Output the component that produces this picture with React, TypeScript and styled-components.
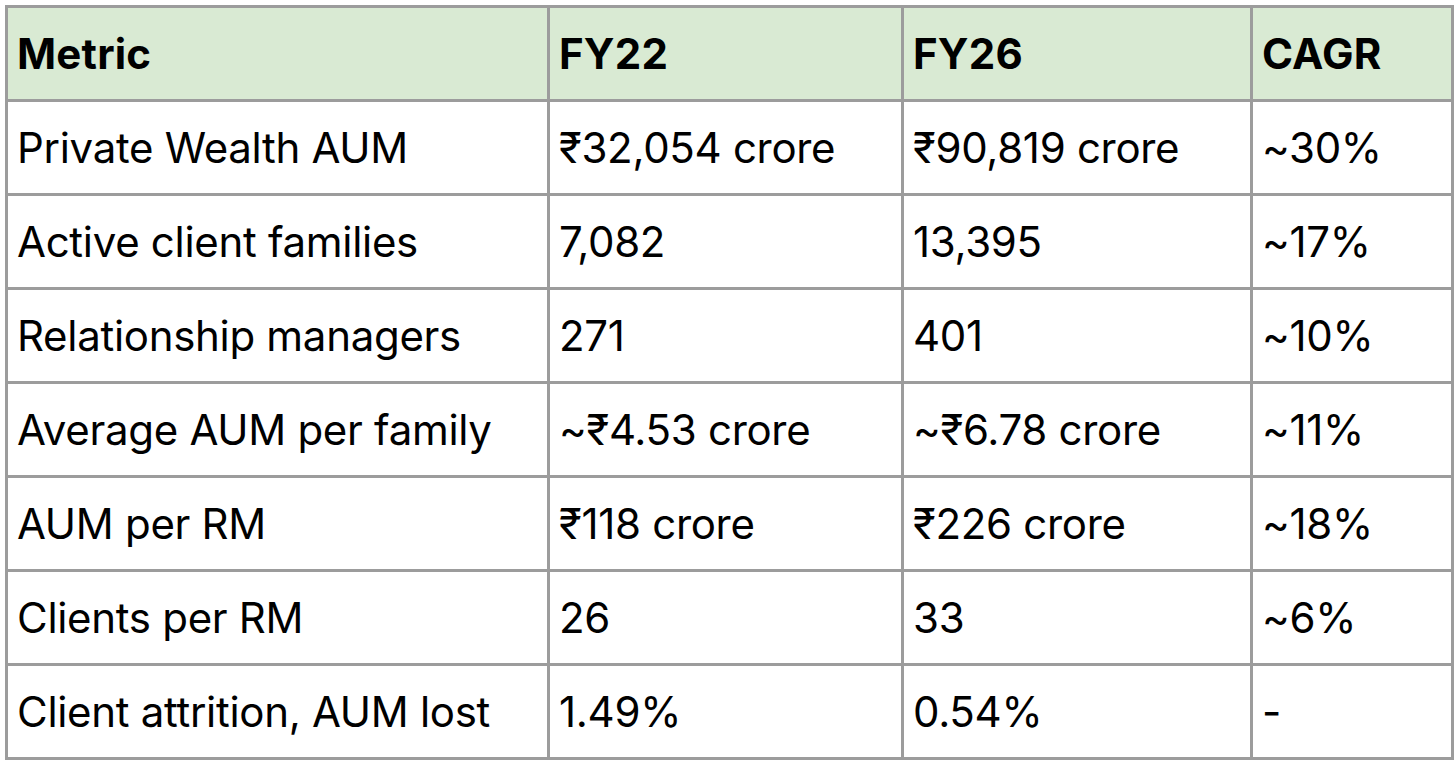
import styled, { createGlobalStyle } from "styled-components";

const GlobalStyle = createGlobalStyle`
    html, body {
        margin: 0;
        padding: 0;
        background: #ffffff;
    }
    body {
        font-family: Inter, "Noto Sans", "DejaVu Sans", sans-serif;
        color: #000000;
    }
`;

const Page = styled.div`
    padding: 5px 5px 0 5px;
`;

const Table = styled.table`
    width: 1446px;
    border-collapse: collapse;
    table-layout: fixed;
    border: 3px solid #9c9c9c;
`;

const Row = styled.tr<{ $head?: boolean }>`
    height: 94px;
    background: ${(p) => (p.$head ? "#d9ead3" : "#ffffff")};
`;

const Cell = styled.td<{ $head?: boolean }>`
    border: 3px solid #9c9c9c;
    padding: 0 0 0 9px;
    font-size: 42px;
    font-weight: ${(p) => (p.$head ? 700 : 400)};
    letter-spacing: ${(p) => (p.$head ? "0.2px" : "-0.3px")};
    text-align: left;
    white-space: nowrap;
    vertical-align: middle;
`;

const columns = [
    { label: "Metric", width: 542 },
    { label: "FY22", width: 354 },
    { label: "FY26", width: 349 },
    { label: "CAGR", width: 201 },
];

const rows = [
    ["Private Wealth AUM", "₹32,054 crore", "₹90,819 crore", "~30%"],
    ["Active client families", "7,082", "13,395", "~17%"],
    ["Relationship managers", "271", "401", "~10%"],
    ["Average AUM per family", "~₹4.53 crore", "~₹6.78 crore", "~11%"],
    ["AUM per RM", "₹118 crore", "₹226 crore", "~18%"],
    ["Clients per RM", "26", "33", "~6%"],
    ["Client attrition, AUM lost", "1.49%", "0.54%", "-"],
];

const App = () => {
    return (
        <>
            <GlobalStyle />
            <Page>
                <Table>
                    <colgroup>
                        {columns.map((c) => (
                            <col key={c.label} style={{ width: c.width }} />
                        ))}
                    </colgroup>
                    <thead>
                        <Row $head>
                            {columns.map((c) => (
                                <Cell as="th" $head key={c.label}>
                                    {c.label}
                                </Cell>
                            ))}
                        </Row>
                    </thead>
                    <tbody>
                        {rows.map((r) => (
                            <Row key={r[0]}>
                                {r.map((v, i) => (
                                    <Cell key={i}>{v}</Cell>
                                ))}
                            </Row>
                        ))}
                    </tbody>
                </Table>
            </Page>
        </>
    );
};

export default App;
